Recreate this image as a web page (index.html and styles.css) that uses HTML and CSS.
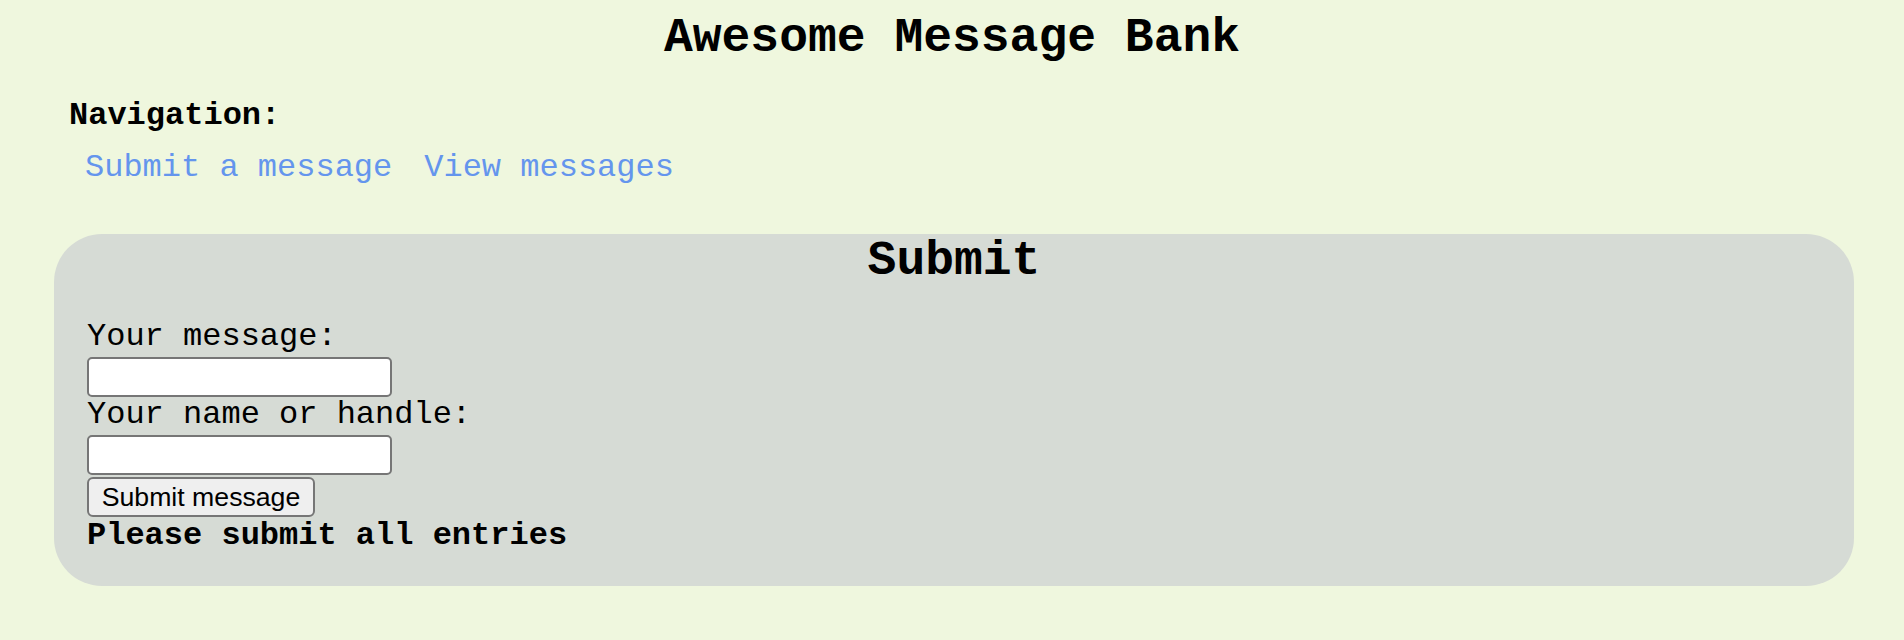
FILE: index.html
```html
<!DOCTYPE html>
<html>
<head>
<meta charset="utf-8">
<title>Awesome Message Bank</title>
<link rel="stylesheet" href="styles.css">
</head>
<body>
<header class="site-header">
  <h1 class="site-title">Awesome Message Bank</h1>
</header>
<nav class="nav">
  <div class="nav-label">Navigation:</div>
  <div class="nav-links">
    <a class="nav-link" href="#submit">Submit a message</a>
    <a class="nav-link" href="#view">View messages</a>
  </div>
</nav>
<section class="panel" id="submit">
  <h2 class="panel-title">Submit</h2>
  <form class="form" onsubmit="return false;">
    <label class="field-label" for="msg">Your message:</label>
    <input class="field-input" id="msg" type="text">
    <label class="field-label" for="name">Your name or handle:</label>
    <input class="field-input" id="name" type="text">
    <button class="submit-btn" type="submit">Submit message</button>
    <div class="form-status">Please submit all entries</div>
  </form>
</section>
</body>
</html>
```

FILE: styles.css
```css
html, body {
  margin: 0;
  padding: 0;
}
body {
  background: #eff7de;
  color: #000;
  font-family: "Liberation Mono", "Courier New", monospace;
  font-size: 32px;
  width: 1904px;
  min-height: 640px;
}
.site-header {
  padding-top: 11px;
}
.site-title {
  margin: 0;
  font-size: 48px;
  font-weight: bold;
  line-height: normal;
  text-align: center;
}
.nav {
  margin-top: 32px;
  padding-left: 69px;
}
.nav-label {
  font-weight: bold;
  line-height: normal;
}
.nav-links {
  display: flex;
  margin-top: 15px;
  line-height: normal;
}
.nav-link {
  color: #6495ed;
  text-decoration: none;
  padding: 0 16px;
}
.panel {
  margin: 48px 0 0 54px;
  width: 1800px;
  box-sizing: border-box;
  background: #d6dbd5;
  border-radius: 48px;
  padding: 7px 33px 32px 33px;
}
.panel-title {
  margin: 0;
  font-size: 48px;
  font-weight: bold;
  line-height: 40px;
  text-align: center;
}
.form {
  display: flex;
  flex-direction: column;
  align-items: flex-start;
  margin-top: 38px;
}
.field-label {
  display: block;
  line-height: 36px;
  margin-bottom: 2px;
}
.field-input {
  box-sizing: border-box;
  width: 305px;
  height: 40px;
  margin: 0;
  background: #fff;
  border: 2px solid #767676;
  border-radius: 5px;
  font-size: 26px;
  padding: 2px 4px;
}
.submit-btn {
  box-sizing: border-box;
  width: 228px;
  height: 40px;
  margin: 2px 0 0 0;
  padding: 0 12px;
  background: #efefef;
  border: 2px solid #767676;
  border-radius: 6px;
  color: #000;
  font-family: "Liberation Sans", Arial, sans-serif;
  font-size: 26.67px;
}
.form-status {
  font-weight: bold;
  line-height: normal;
}
```
